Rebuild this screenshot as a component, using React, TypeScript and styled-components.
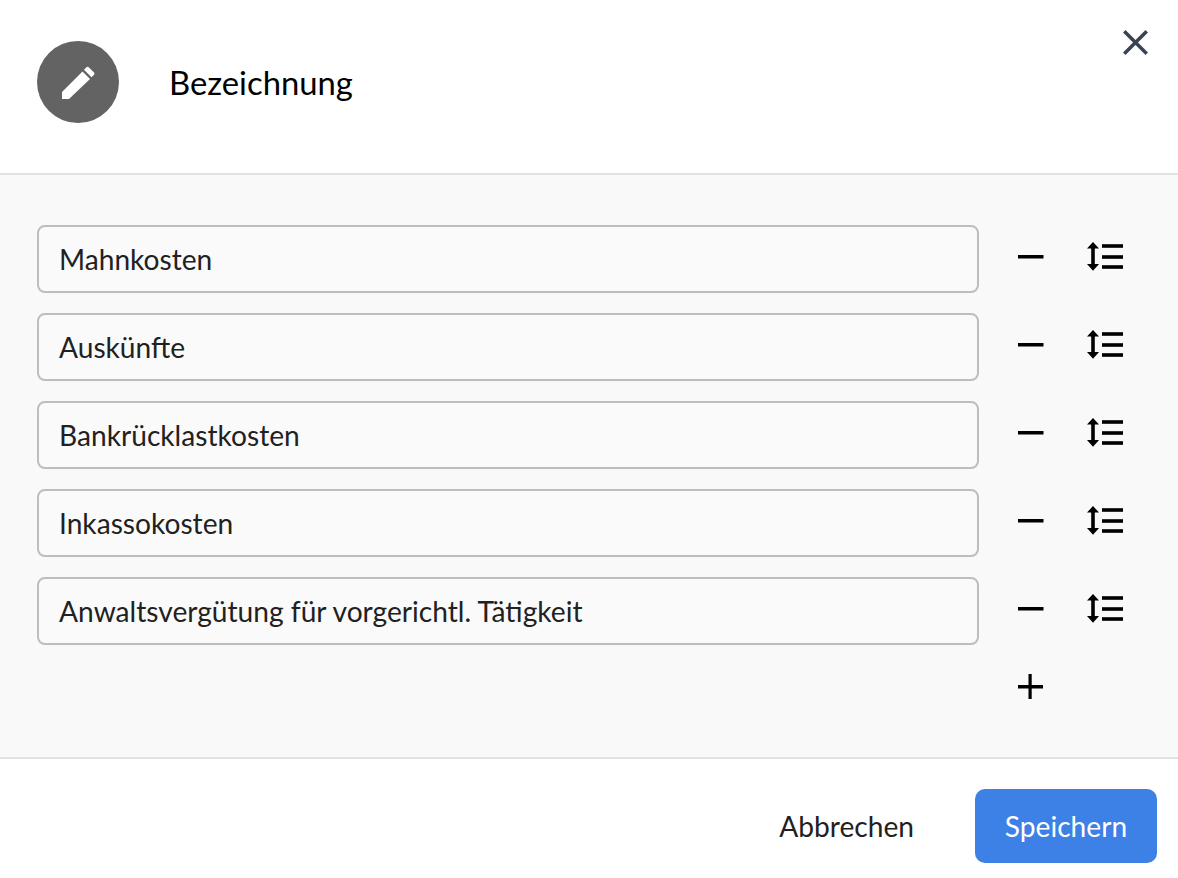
import React from "react";
import styled, { createGlobalStyle } from "styled-components";

const Global = createGlobalStyle`
  html, body { margin: 0; padding: 0; background: #fff; }
  body { font-family: Lato, "Open Sans", sans-serif; }
  * { box-sizing: border-box; }
`;

const Dialog = styled.div`
  position: relative;
  width: 1178px;
  height: 878px;
  display: flex;
  flex-direction: column;
  background: #fff;
`;

const Header = styled.header`
  height: 175px;
  flex: none;
  display: flex;
  align-items: flex-start;
  padding: 41px 0 0 37px;
  border-bottom: 2px solid #e2e2e2;
`;

const Avatar = styled.div`
  width: 82px;
  height: 82px;
  flex: none;
  border-radius: 50%;
  background: #636363;
  display: flex;
  align-items: center;
  justify-content: center;
`;

const Title = styled.h1`
  margin: 1px 0 0 50px;
  height: 82px;
  line-height: 82px;
  font-size: 32.8px;
  font-weight: 400;
  color: #000;
`;

const CloseButton = styled.button`
  position: absolute;
  top: 28px;
  right: 28px;
  width: 28px;
  height: 28px;
  padding: 0;
  border: 0;
  background: none;
  display: flex;
`;

const Body = styled.main`
  flex: 1;
  background: #f9f9f9;
  padding: 50px 0 0 37px;
  display: flex;
  flex-direction: column;
  gap: 20px;
`;

const Row = styled.div`
  display: flex;
  align-items: center;
`;

const Field = styled.div`
  width: 942px;
  height: 68px;
  border: 2px solid #bdbdbd;
  border-radius: 8px;
  background: #fafafa;
  padding: 0 20px;
  display: flex;
  align-items: center;
  font-size: 28.15px;
  color: #212121;
`;

const IconButton = styled.button`
  width: 26px;
  height: 26px;
  margin-left: 39px;
  padding: 0;
  border: 0;
  background: none;
  display: flex;
  flex: none;
`;

const SortButton = styled.button`
  width: 36px;
  height: 32px;
  margin-left: 43px;
  margin-top: -4px;
  padding: 0;
  border: 0;
  background: none;
  display: flex;
  flex: none;
`;

const AddRow = styled.div`
  padding-left: 942px;
  margin-top: 9px;
`;

const Footer = styled.footer`
  height: 121px;
  flex: none;
  border-top: 2px solid #e2e2e2;
  display: flex;
  align-items: flex-start;
  justify-content: flex-end;
  padding: 30px 21px 0 0;
`;

const CancelButton = styled.button`
  height: 74px;
  margin-right: 61px;
  padding: 0;
  border: 0;
  background: none;
  font: inherit;
  font-size: 28.15px;
  color: #212121;
`;

const SaveButton = styled.button`
  width: 182px;
  height: 74px;
  border: 0;
  border-radius: 10px;
  background: #3d80e6;
  color: #fff;
  font: inherit;
  font-size: 28.15px;
`;

const items = [
  "Mahnkosten",
  "Auskünfte",
  "Bankrücklastkosten",
  "Inkassokosten",
  "Anwaltsvergütung für vorgerichtl. Tätigkeit",
];

const Pencil = () => (
  <svg width="34" height="34" viewBox="-1 -1 34 34" fill="#fff">
    <path d="M0 33 V26 L20.5 5.5 L28 13 L7 33 Z" />
    <path d="M22 3.8 L24.5 1.2 Q25.5 0.3 26.7 1.2 L32 6.5 Q33 7.7 32 8.8 L29.5 11.3 Z" />
  </svg>
);

const Close = () => (
  <svg width="28" height="28" viewBox="0 0 28 28" stroke="#3a4350" strokeWidth="3.5" strokeLinecap="square">
    <path d="M3.5 4.5 L23.5 24.5 M23.5 4.5 L3.5 24.5" />
  </svg>
);

const Minus = () => (
  <svg width="26" height="26" viewBox="0 0 26 26">
    <rect x="0" y="9" width="25.5" height="3.5" fill="#000" />
  </svg>
);

const Plus = () => (
  <svg width="26" height="26" viewBox="0 0 26 26">
    <rect x="0" y="11" width="25" height="3.5" fill="#000" />
    <rect x="10.5" y="0" width="3.2" height="25" fill="#000" />
  </svg>
);

const Sort = () => (
  <svg width="36" height="32" viewBox="0 0 36 32" fill="#000">
    <path d="M6 1 L12 7.5 H7.8 V23 H12 L6 29.7 L0 23 H4.2 V7.5 H0 Z" />
    <rect x="15" y="3.2" width="21" height="3.6" />
    <rect x="15" y="14.2" width="21" height="3.6" />
    <rect x="15" y="24.2" width="21" height="3.6" />
  </svg>
);

export default function App() {
  return (
    <Dialog>
      <Global />
      <Header>
        <Avatar>
          <Pencil />
        </Avatar>
        <Title>Bezeichnung</Title>
      </Header>
      <CloseButton aria-label="Schließen">
        <Close />
      </CloseButton>
      <Body>
        {items.map((item) => (
          <Row key={item}>
            <Field>{item}</Field>
            <IconButton aria-label="Entfernen">
              <Minus />
            </IconButton>
            <SortButton aria-label="Sortieren">
              <Sort />
            </SortButton>
          </Row>
        ))}
        <AddRow>
          <IconButton aria-label="Hinzufügen">
            <Plus />
          </IconButton>
        </AddRow>
      </Body>
      <Footer>
        <CancelButton>Abbrechen</CancelButton>
        <SaveButton>Speichern</SaveButton>
      </Footer>
    </Dialog>
  );
}
